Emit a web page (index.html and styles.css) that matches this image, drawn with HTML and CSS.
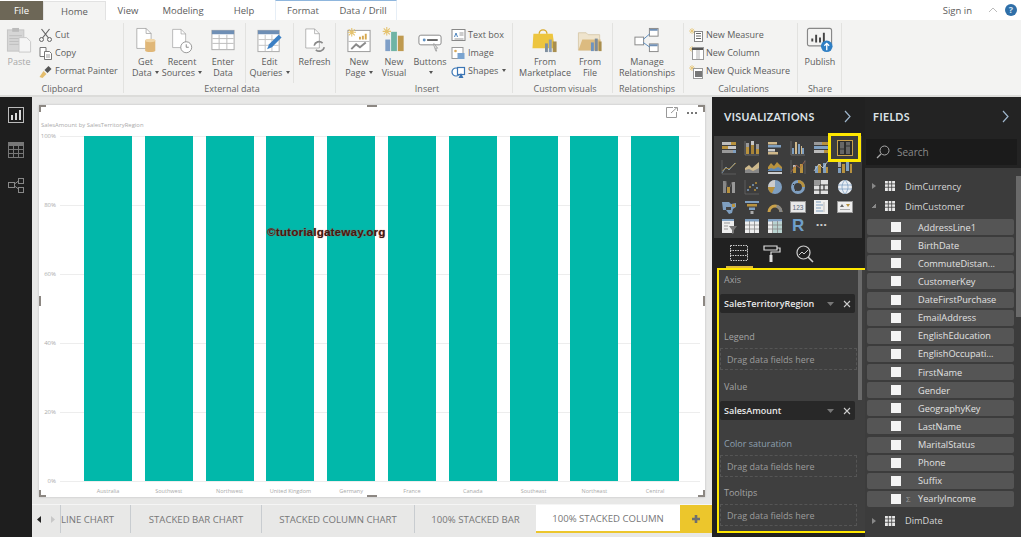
FILE: index.html
```html
<!DOCTYPE html>
<html lang="en">
<head>
<meta charset="utf-8">
<title>Power BI Desktop</title>
<link rel="stylesheet" href="styles.css">
</head>
<body>
<svg class="defs" width="0" height="0" aria-hidden="true">
  <symbol id="tbl" viewBox="0 0 12 12"><rect width="12" height="12" fill="#e8e8e8"/><path d="M4 0v12M8 0v12M0 3.500h12M0 7.500h12" stroke="#444" stroke-width="1"/></symbol>
  <symbol id="doc" viewBox="0 0 26 32"><path d="M2.500 1.500h13l7 7v21h-20z" fill="#fff" stroke="#9a9a9a"/><path d="M15.500 1.500v7h7" fill="none" stroke="#9a9a9a"/></symbol>
  <symbol id="spark" viewBox="0 0 8 8"><path d="M4 0v8M0 4h8M1.200 1.200l5.600 5.600M6.800 1.200l-5.600 5.600" stroke="#e5c36f" stroke-width="1"/></symbol>
</svg>
<div class="app">
  <header class="tabbar">
    <div class="tab-file">File</div>
    <div class="tab tab-home">Home</div>
    <div class="tab tab-view">View</div>
    <div class="tab tab-model">Modeling</div>
    <div class="tab tab-help">Help</div>
    <div class="tab-context">
      <div class="tab tab-format">Format</div>
      <div class="tab tab-drill">Data / Drill</div>
    </div>
    <div class="signin">Sign in</div>
    <svg class="caret-up" width="10" height="6" viewBox="0 0 10 6"><path d="M1 5l4-4 4 4" fill="none" stroke="#bbb"/></svg>
    <div class="help">?</div>
  </header>

  <section class="ribbon">
    <div class="group g-clip">
      <div class="group-body">
        <div class="big big-paste disabled">
          <svg class="bigicon" width="26" height="28" viewBox="0 0 26 28"><rect x="1" y="3" width="17" height="22" fill="#d6d6d6" stroke="#c4c4c4"/><rect x="6" y="1" width="7" height="4" fill="#bbb"/><path d="M3 9h13M3 12h13M3 15h13M3 18h13" stroke="#bdbdbd"/><path d="M13 11h8l4 4v11H13z" fill="#f5f5f5" stroke="#c8c8c8"/></svg>
          <span>Paste</span>
        </div>
        <div class="stack">
          <div class="small"><svg width="14" height="14" viewBox="0 0 14 14"><path d="M3 1l7 9M11 1L4 10" stroke="#666" stroke-width="1.200"/><circle cx="3" cy="11.500" r="2" fill="none" stroke="#666"/><circle cx="11" cy="11.500" r="2" fill="none" stroke="#666"/></svg><span>Cut</span></div>
          <div class="small"><svg width="14" height="14" viewBox="0 0 14 14"><path d="M1.500 1.500h6v9h-6z" fill="#fff" stroke="#777"/><path d="M6 5.500h5l2 2v6H6z" fill="#fff" stroke="#777"/><path d="M7.500 9h4M7.500 11h4" stroke="#999"/></svg><span>Copy</span></div>
          <div class="small"><svg width="14" height="14" viewBox="0 0 14 14"><path d="M1 12l4-6 3 3-4 4z" fill="#e4bd6d"/><path d="M6 5l4-4 3 3-4 4z" fill="#555"/></svg><span>Format Painter</span></div>
        </div>
      </div>
      <div class="group-label">Clipboard</div>
    </div>

    <div class="group g-ext">
      <div class="group-body">
        <div class="big w35">
          <svg class="bigicon" width="26" height="28" viewBox="0 0 26 32"><use href="#doc" width="22" height="28"/><path d="M12 16c0-2 12-2 12 0v12c0 2-12 2-12 0z" fill="#e0b778"/><ellipse cx="18" cy="16" rx="6" ry="2" fill="#f0d6a8"/></svg>
          <span>Get</span><span>Data <i class="arrow"></i></span>
        </div>
        <div class="big w38">
          <svg class="bigicon" width="26" height="28" viewBox="0 0 26 32"><use href="#doc" width="20" height="28"/><circle cx="18" cy="24" r="6.500" fill="#fff" stroke="#888"/><path d="M18 20.500V24h3" fill="none" stroke="#777"/></svg>
          <span>Recent</span><span>Sources <i class="arrow"></i></span>
        </div>
        <div class="big w44">
          <svg class="bigicon" width="24" height="28" viewBox="0 0 24 28"><rect x="0.500" y="3.500" width="23" height="20" fill="#fff" stroke="#aaa"/><rect x="0.500" y="3.500" width="23" height="4" fill="#6f8fb5"/><path d="M8 8v15M16 8v15M1 12h22M1 17h22" stroke="#bbb"/></svg>
          <span>Enter</span><span>Data</span>
        </div>
        <div class="big w48 sep-left">
          <svg class="bigicon" width="26" height="28" viewBox="0 0 26 28"><rect x="0.500" y="3.500" width="22" height="22" fill="#fff" stroke="#aaa"/><rect x="0.500" y="3.500" width="22" height="4" fill="#6f8fb5"/><path d="M8 8v17M15 8v17M1 13h21M1 19h21" stroke="#c5c5c5"/><path d="M10 23l2-5 10-10 3 3-10 10z" fill="#3c80c4"/></svg>
          <span>Edit</span><span>Queries <i class="arrow"></i></span>
        </div>
        <div class="big w42 sep-left">
          <svg class="bigicon" width="26" height="28" viewBox="0 0 26 32"><use href="#doc" width="21" height="28"/><path d="M12 22a6 6 0 0 1 10-3M24 24a6 6 0 0 1-10 3" fill="none" stroke="#888" stroke-width="2"/></svg>
          <span>Refresh</span>
        </div>
      </div>
      <div class="group-label">External data</div>
    </div>

    <div class="group g-ins">
      <div class="group-body">
        <div class="big w36">
          <svg class="bigicon" width="26" height="28" viewBox="0 0 26 28"><rect x="1.500" y="3.500" width="23" height="22" fill="#fff" stroke="#999"/><use href="#spark" x="1" y="1" width="9" height="9"/><path d="M14 13v-3M17 13V9M20 13V7" stroke="#d6a84f" stroke-width="2"/><path d="M2 15h22" stroke="#bbb"/><path d="M5 23l5-5 4 3 6-5" fill="none" stroke="#8a8a8a" stroke-width="2"/></svg>
          <span>New</span><span>Page <i class="arrow"></i></span>
        </div>
        <div class="big w34">
          <svg class="bigicon" width="24" height="28" viewBox="0 0 24 28"><use href="#spark" x="0" y="0" width="9" height="9"/><rect x="3" y="13" width="5" height="12" fill="#7f9fc7"/><rect x="9" y="5" width="6" height="20" fill="#6fb4a5"/><rect x="16" y="9" width="6" height="16" fill="#bf9a50"/></svg>
          <span>New</span><span>Visual</span>
        </div>
        <div class="big w38">
          <svg class="bigicon" width="24" height="28" viewBox="0 0 24 28"><rect x="0.500" y="8.500" width="23" height="10" rx="2" fill="#fff" stroke="#888"/><circle cx="6" cy="13.500" r="1.500" fill="#5e8fc0"/><path d="M9 13.500h11" stroke="#666" stroke-width="2"/><path d="M16 17l4 5-2 0 1 3-1 0-2-6z" fill="#ddd" stroke="#888" stroke-width=".6"/></svg>
          <span>Buttons</span><span><i class="arrow"></i></span>
        </div>
        <div class="stack stack-ins">
          <div class="small"><svg width="14" height="14" viewBox="0 0 14 14"><rect x="0.500" y="1.500" width="13" height="11" fill="#fff" stroke="#888"/><path d="M3 9l1.500-4L6 9" fill="none" stroke="#4d84bd"/><path d="M8 5h4M8 7h4M3 11h9" stroke="#999"/></svg><span>Text box</span></div>
          <div class="small"><svg width="14" height="14" viewBox="0 0 14 14"><rect x="0.500" y="1.500" width="11" height="11" fill="#fff" stroke="#999"/><circle cx="4" cy="5" r="1.300" fill="#d9a95a"/><rect x="6" y="7" width="7" height="6" fill="#7ba4d0"/></svg><span>Image</span></div>
          <div class="small"><svg width="14" height="14" viewBox="0 0 14 14"><circle cx="4.500" cy="7" r="4" fill="#fff" stroke="#3c76b4" stroke-width="1.200"/><rect x="6" y="2.500" width="7" height="7" fill="#fff" stroke="#3c76b4" stroke-width="1.200"/><path d="M7 13l2.500-5 2.500 5z" fill="#3c76b4"/></svg><span>Shapes <i class="arrow"></i></span></div>
        </div>
      </div>
      <div class="group-label">Insert</div>
    </div>

    <div class="group g-cust">
      <div class="group-body">
        <div class="big w56">
          <svg class="bigicon" width="26" height="28" viewBox="0 0 26 28"><path d="M7 7a4 4 0 0 1 8 0" fill="none" stroke="#d7a92c" stroke-width="1.500"/><path d="M1 7h20l2 15H0z" fill="#edc53f"/><rect x="13" y="17" width="3" height="9" fill="#7f8f9f"/><rect x="17" y="13" width="3" height="13" fill="#8d9fb5"/><rect x="21" y="15" width="4" height="11" fill="#a98e4e"/></svg>
          <span>From</span><span>Marketplace</span>
        </div>
        <div class="big w34">
          <svg class="bigicon" width="26" height="28" viewBox="0 0 26 28"><path d="M1 6h8l2 2h12v16H1z" fill="#efe4cd" stroke="#d9cbae"/><path d="M1 24l4-11h19l-1 11z" fill="#dcbb80"/><rect x="14" y="16" width="3" height="9" fill="#6e93bf"/><rect x="18" y="12" width="3" height="13" fill="#7d8c9b"/><rect x="22" y="15" width="3" height="10" fill="#a98e4e"/></svg>
          <span>From</span><span>File</span>
        </div>
      </div>
      <div class="group-label">Custom visuals</div>
    </div>

    <div class="group g-rel">
      <div class="group-body">
        <div class="big w66">
          <svg class="bigicon" width="26" height="28" viewBox="0 0 26 28"><rect x="0.500" y="10.500" width="9" height="8" fill="#fff" stroke="#888"/><rect x="15.500" y="1.500" width="9" height="8" fill="#fff" stroke="#888"/><rect x="15.500" y="17.500" width="9" height="8" fill="#fff" stroke="#888"/><path d="M16 2h8v2h-8zM16 18h8v2h-8z" fill="#6f8fb5"/><path d="M9 13l7-6M9 16l7 5" stroke="#5c8cbd"/></svg>
          <span>Manage</span><span>Relationships</span>
        </div>
      </div>
      <div class="group-label">Relationships</div>
    </div>

    <div class="group g-calc">
      <div class="group-body">
        <div class="stack">
          <div class="small"><svg width="15" height="14" viewBox="0 0 15 14"><use href="#spark" width="6" height="6"/><rect x="5.500" y="3.500" width="8" height="10" fill="#fff" stroke="#888"/><path d="M7 5.500h5M7 8h5M7 10.500h5" stroke="#666"/></svg><span>New Measure</span></div>
          <div class="small"><svg width="15" height="14" viewBox="0 0 15 14"><use href="#spark" width="6" height="6"/><rect x="3.500" y="1.500" width="11" height="12" fill="#fff" stroke="#999"/><rect x="7" y="2" width="4" height="11" fill="#d9d9d9"/><path d="M3 2h11v2H3z" fill="#555"/></svg><span>New Column</span></div>
          <div class="small"><svg width="15" height="14" viewBox="0 0 15 14"><use href="#spark" width="6" height="6"/><rect x="4.500" y="3.500" width="9" height="10" fill="#fff" stroke="#999"/><rect x="6" y="6" width="7" height="6" fill="#777"/></svg><span>New Quick Measure</span></div>
        </div>
      </div>
      <div class="group-label">Calculations</div>
    </div>

    <div class="group g-share">
      <div class="group-body">
        <div class="big w44 big-publish">
          <svg class="bigicon" width="28" height="28" viewBox="0 0 28 28"><rect x="1" y="1.500" width="25" height="18" rx="2" fill="none" stroke="#888" stroke-width="1.200"/><path d="M6 15v-3M10 16V8M14 16v-5M18 16V6" stroke="#444" stroke-width="2"/><circle cx="21" cy="20" r="6" fill="#2f7fc4"/><path d="M21 24v-7M18.500 19.500L21 17l2.500 2.500" fill="none" stroke="#fff" stroke-width="1.400"/></svg>
          <span>Publish</span>
        </div>
      </div>
      <div class="group-label">Share</div>
    </div>
    <div class="ribbon-rest"></div>
  </section>

  <main class="main">
    <nav class="leftnav">
      <svg width="16" height="16" viewBox="0 0 16 16"><rect x="0.500" y="0.500" width="15" height="15" fill="none" stroke="#bbb"/><path d="M4 13V8M8 13V6M12 13V3" stroke="#ddd" stroke-width="2"/></svg>
      <svg width="16" height="16" viewBox="0 0 16 16"><rect x="0.500" y="0.500" width="15" height="15" fill="none" stroke="#777"/><rect y="0" width="16" height="4" fill="#777"/><path d="M5.500 4v12M10.500 4v12M0 7.500h16M0 11.500h16" stroke="#777"/></svg>
      <svg width="16" height="16" viewBox="0 0 16 16"><rect x="0.500" y="5.500" width="6" height="5" fill="none" stroke="#888"/><rect x="10.500" y="1.500" width="5" height="5" fill="none" stroke="#888"/><rect x="10.500" y="10.500" width="5" height="5" fill="none" stroke="#888"/><path d="M6.500 7l4-3M6.500 9l4 3" stroke="#888"/></svg>
    </nav>

    <div class="canvas">
      <div class="page-wrap">
        <div class="page">
          <i class="handle h-tl"></i><i class="handle h-tr"></i><i class="handle h-bl"></i><i class="handle h-br"></i>
          <i class="grip grip-top"></i><i class="grip grip-bottom"></i><i class="grip-side grip-left"></i><i class="grip-side grip-right"></i>
          <div class="focus">
            <svg width="12" height="11" viewBox="0 0 12 11"><path d="M7 .500H.500v10h10V5M5 6L11 .500M8 .500h3.500V4" fill="none" stroke="#999"/></svg>
            <span class="dots"><i></i><i></i><i></i></span>
          </div>
          <div class="chart-title">SalesAmount by SalesTerritoryRegion</div>
          <div class="chart">
            <div class="yaxis"><span>100%</span><span>80%</span><span>60%</span><span>40%</span><span>20%</span><span>0%</span></div>
            <div class="chart-main">
              <div class="plot">
                <div class="bar"></div><div class="bar"></div><div class="bar"></div><div class="bar"></div><div class="bar"></div>
                <div class="bar"></div><div class="bar"></div><div class="bar"></div><div class="bar"></div><div class="bar"></div>
              </div>
              <div class="xaxis">
                <span>Australia</span><span>Southwest</span><span>Northwest</span><span>United Kingdom</span><span>Germany</span>
                <span>France</span><span>Canada</span><span>Southeast</span><span>Northeast</span><span>Central</span>
              </div>
            </div>
          </div>
          <div class="watermark">©tutorialgateway.org</div>
        </div>
      </div>
      <div class="pagetabs">
        <div class="tab-arrows">
          <svg width="5" height="7" viewBox="0 0 5 7"><path d="M4 0v7L0 3.500z" fill="#222"/></svg>
          <svg width="5" height="7" viewBox="0 0 5 7"><path d="M1 0v7l4-3.500z" fill="#c8c8c8"/></svg>
        </div>
        <div class="ptab pt-line">LINE CHART</div>
        <div class="ptab pt-bar">STACKED BAR CHART</div>
        <div class="ptab pt-col">STACKED COLUMN CHART</div>
        <div class="ptab pt-100bar">100% STACKED BAR</div>
        <div class="ptab pt-active">100% STACKED COLUMN</div>
        <div class="pt-add"><svg width="10" height="10" viewBox="0 0 10 10"><path d="M5 1v8M1 5h8" stroke="#6f6f6f" stroke-width="2.600"/></svg></div>
      </div>
    </div>

    <aside class="viz">
      <div class="panel-head head-viz"><span>VISUALIZATIONS</span><svg width="7" height="13" viewBox="0 0 7 13"><path d="M1 1l5 5.500L1 12" fill="none" stroke="#9fb6cc" stroke-width="1.200"/></svg></div>
      <div class="gallery">
        <svg viewBox="0 0 16 16"><path d="M1 2h9v3H1z" fill="#bdbdbd"/><path d="M10 2h5v3h-5z" fill="#b8923e"/><path d="M1 6h6v3H1z" fill="#b8923e"/><path d="M7 6h8v3H7z" fill="#c8c8c8"/><path d="M1 10h11v3H1z" fill="#999"/><path d="M12 10h3v3h-3z" fill="#7f9fc0"/></svg>
        <svg viewBox="0 0 16 16"><path d="M2 7h3v7H2z" fill="#b8923e"/><path d="M2 3h3v4H2z" fill="#999"/><path d="M7 5h3v9H7z" fill="#a88437"/><path d="M7 1h3v4H7z" fill="#c8c8c8"/><path d="M12 9h3v5h-3z" fill="#b8923e"/><path d="M12 4h3v5h-3z" fill="#999"/><path d="M1 1v14h14" fill="none" stroke="#777" stroke-width=".8"/></svg>
        <svg viewBox="0 0 16 16"><path d="M1 2h9v2.500H1z" fill="#d0b88a"/><path d="M1 5h13v2.500H1z" fill="#7f9fc0"/><path d="M1 9h7v2.500H1z" fill="#ccc"/><path d="M1 12h10v2.500H1z" fill="#d0b88a"/></svg>
        <svg viewBox="0 0 16 16"><path d="M2 8h2v6H2zM8 4h2v10H8zM12 8h2v6h-2z" fill="#7f9fc0"/><path d="M5 2h2v12H5zM11 6h1v8h-1z" fill="#d0b88a"/><path d="M1 1v14h14" fill="none" stroke="#777" stroke-width=".8"/></svg>
        <svg viewBox="0 0 16 16"><path d="M1 2h15v3H1z" fill="#999"/><path d="M1 6h15v3H1z" fill="#7f9fc0"/><path d="M1 10h15v3H1z" fill="#bbb"/><path d="M9 2h7v3H9zM11 10h5v3h-5z" fill="#b8923e"/></svg>
        <svg viewBox="0 0 16 16"><rect x="0.500" y="0.500" width="15" height="15" fill="#2c2c2c" stroke="#c9a14a"/><rect x="3" y="2" width="4" height="12" fill="#666"/><rect x="9" y="2" width="4" height="12" fill="#666"/><path d="M3 9h4M9 6h4" stroke="#333"/></svg>

        <svg viewBox="0 0 16 16"><path d="M1 14L5 8l3 3 6-7" fill="none" stroke="#7f9fc0"/><path d="M1 12l4-3 3 1 7-6" fill="none" stroke="#b8923e" stroke-width=".8"/><path d="M1 1v14h14" fill="none" stroke="#666" stroke-width=".8"/></svg>
        <svg viewBox="0 0 16 16"><path d="M1 14V9l4-3 3 3 7-6v11z" fill="#cdb88c"/><path d="M1 14v-3l4-1 4 2 6-3v5z" fill="#888"/></svg>
        <svg viewBox="0 0 16 16"><path d="M1 8l3-4 3 3 3-4 5 5v2H1z" fill="#b8923e"/><path d="M1 11l3-2 3 1 4-2 4 2v2H1z" fill="#5f88b5"/><path d="M1 13h14v2H1z" fill="#ccc"/></svg>
        <svg viewBox="0 0 16 16"><path d="M3 8h3v6H3zM10 5h3v9h-3z" fill="#b8923e"/><path d="M3 6h3v2H3z" fill="#bbb"/><path d="M1 13l5-7 4 3 5-7" fill="none" stroke="#b06a4a" stroke-width=".8"/><path d="M1 1v14M15 1v14" stroke="#777" stroke-width=".6"/></svg>
        <svg viewBox="0 0 16 16"><path d="M2 7h3v7H2zM10 4h3v10h-3z" fill="#7f9fc0"/><path d="M5 5h3v9H5zM13 8h2v6h-2z" fill="#b8923e"/><path d="M1 12l5-7 4 4 5-7" fill="none" stroke="#ccc" stroke-width=".8"/></svg>
        <svg viewBox="0 0 16 16"><path d="M1 3h3v5H1z" fill="#aaa"/><path d="M5 5h3v9H5z" fill="#b8923e"/><path d="M9 3h3v9H9z" fill="#7f9fc0"/><path d="M13 5h2v9h-2z" fill="#b8923e"/><path d="M1 9h3v5H1z" fill="#7f9fc0"/></svg>

        <svg viewBox="0 0 16 16"><path d="M2 2h3v12H2z" fill="#888"/><path d="M6 8h3v6H6z" fill="#b8923e"/><path d="M11 3h3v11h-3z" fill="#999"/><path d="M5 2l1 6M9 8l2-5" stroke="#666"/></svg>
        <svg viewBox="0 0 16 16"><path d="M1 1v14h14" fill="none" stroke="#666" stroke-width=".8"/><g fill="#7f9fc0"><circle cx="4" cy="11" r="1"/><circle cx="9" cy="6" r="1"/><circle cx="13" cy="9" r="1"/></g><g fill="#b8923e"><circle cx="6" cy="8" r="1"/><circle cx="11" cy="11" r="1"/><circle cx="12" cy="4" r="1"/></g></svg>
        <svg viewBox="0 0 16 16"><circle cx="8" cy="8" r="7" fill="#7f9fc0"/><path d="M8 8V1a7 7 0 0 0-7 7z" fill="#ccc"/><path d="M8 8H1a7 7 0 0 0 4 6.300z" fill="#b8923e"/></svg>
        <svg viewBox="0 0 16 16"><circle cx="8" cy="8" r="5.500" fill="none" stroke="#7f9fc0" stroke-width="3"/><path d="M8 2.500A5.500 5.500 0 0 1 13.500 8" fill="none" stroke="#b8923e" stroke-width="3"/><path d="M3 5l1 1M5 12l1-1" stroke="#333"/></svg>
        <svg viewBox="0 0 16 16"><rect x="1" y="1" width="14" height="14" fill="#e0e0e0"/><path d="M1 6h14M1 11h14M7 1v14M11 6v5" stroke="#333" stroke-width="1.200"/><rect x="1" y="1" width="6" height="5" fill="#999"/></svg>
        <svg viewBox="0 0 16 16"><circle cx="8" cy="8" r="7" fill="#e8edf3"/><path d="M1 6h14M1 10h14M8 1c-4 4-4 10 0 14M8 1c4 4 4 10 0 14" fill="none" stroke="#7f9fc0" stroke-width=".8"/></svg>

        <svg viewBox="0 0 16 16"><path d="M1 3h7l2 2 5-1v4l-3 2-1 4-3 1-3-4H2z" fill="#7f9fc0"/><path d="M5 8h5v3H5z" fill="#444"/><path d="M11 5h3v3h-3z" fill="#b8923e"/></svg>
        <svg viewBox="0 0 16 16"><path d="M1 2h14v2H1z" fill="#7f9fc0"/><path d="M3 5h10v2.500H3z" fill="#b8923e"/><path d="M5 8.500h6V11H5z" fill="#7f9fc0"/><path d="M6.500 12h3v3h-3z" fill="#aaa"/></svg>
        <svg viewBox="0 0 16 16"><path d="M2 13a6 6 0 0 1 12 0" fill="none" stroke="#c9a14a" stroke-width="3"/><path d="M9.500 7.300A6 6 0 0 1 14 13" fill="none" stroke="#888" stroke-width="3"/></svg>
        <svg viewBox="0 0 16 16"><rect x="0.500" y="2.500" width="15" height="11" fill="#e8e8e8" stroke="#999"/><text x="8" y="10.500" font-size="6.500" text-anchor="middle" fill="#567" font-family="Liberation Sans">123</text></svg>
        <svg viewBox="0 0 16 16"><rect x="1" y="1" width="14" height="14" fill="#eee"/><path d="M3 3h5M3 6h7M3 9h5M3 12h7" stroke="#7f9fc0"/><path d="M11 3v10" stroke="#bbb"/></svg>
        <svg viewBox="0 0 16 16"><rect x="0.500" y="2.500" width="15" height="11" fill="#eee" stroke="#999"/><path d="M3 8l2-3 2 3z" fill="#666"/><path d="M9 5h4l-2 3z" fill="#b8923e"/><path d="M3 10.500h10" stroke="#aaa"/></svg>

        <svg viewBox="0 0 16 16"><rect x="1" y="1" width="12" height="14" fill="#eee"/><rect x="1" y="1" width="12" height="2" fill="#7f9fc0"/><path d="M3 5h6M3 8h4M3 11h4" stroke="#999"/><path d="M8 8h8l-3 4v3l-2 1v-4z" fill="#777"/></svg>
        <svg viewBox="0 0 16 16"><rect x="1" y="1" width="14" height="14" fill="#eee"/><rect x="1" y="1" width="14" height="2.500" fill="#7f9fc0"/><path d="M5.500 3v12M10.500 3v12M1 7h14M1 11h14" stroke="#888" stroke-width=".8"/></svg>
        <svg viewBox="0 0 16 16"><rect x="1" y="1" width="14" height="14" fill="#eee"/><rect x="1" y="1" width="14" height="2.500" fill="#7f9fc0"/><rect x="6" y="4" width="9" height="11" fill="#b9d3d0"/><path d="M5.500 3v12M10.500 3v12M1 7h14M1 11h14" stroke="#888" stroke-width=".8"/></svg>
        <span class="gal-r">R</span>
        <span class="gal-more">···</span>
      </div>
      <div class="viz-tabs">
        <div class="viz-tab active"><svg width="18" height="16" viewBox="0 0 18 16"><path d="M.500.500h17v15H.500z" fill="none" stroke="#ccc" stroke-dasharray="1.500 1"/><path d="M0 5.500h18M0 10.500h18" stroke="#ccc" stroke-dasharray="1.500 1"/></svg></div>
        <div class="viz-tab"><svg width="18" height="18" viewBox="0 0 18 18"><path d="M1 1h13v4H1z" fill="none" stroke="#ddd" stroke-width="1.200"/><path d="M14 3h3v4H8v3" fill="none" stroke="#ddd" stroke-width="1.200"/><rect x="6.500" y="10" width="3" height="7" fill="#ddd"/></svg></div>
        <div class="viz-tab"><svg width="18" height="18" viewBox="0 0 18 18"><circle cx="7.500" cy="7.500" r="6.500" fill="none" stroke="#ccc" stroke-width="1.200"/><path d="M3 10l3-3 2 2 4-4" fill="none" stroke="#ccc"/><path d="M12 12l5 5" stroke="#ccc" stroke-width="1.600"/></svg></div>
      </div>
      <div class="wells">
        <div class="wells-scroll"></div>
        <div class="well-label w-axis">Axis</div>
        <div class="chip">
          <span>SalesTerritoryRegion</span>
          <svg class="chip-arrow" width="7" height="4" viewBox="0 0 7 4"><path d="M0 0h7L3.500 4z" fill="#777"/></svg>
          <svg class="chip-x" width="8" height="8" viewBox="0 0 8 8"><path d="M1 1l6 6M7 1L1 7" stroke="#ccc" stroke-width="1.100"/></svg>
        </div>
        <div class="well-label w-legend">Legend</div>
        <div class="drop">Drag data fields here</div>
        <div class="well-label w-value">Value</div>
        <div class="chip">
          <span>SalesAmount</span>
          <svg class="chip-arrow" width="7" height="4" viewBox="0 0 7 4"><path d="M0 0h7L3.500 4z" fill="#777"/></svg>
          <svg class="chip-x" width="8" height="8" viewBox="0 0 8 8"><path d="M1 1l6 6M7 1L1 7" stroke="#ccc" stroke-width="1.100"/></svg>
        </div>
        <div class="well-label w-color">Color saturation</div>
        <div class="drop">Drag data fields here</div>
        <div class="well-label w-tips">Tooltips</div>
        <div class="drop">Drag data fields here</div>
      </div>
      <div class="viz-highlight"></div>
    </aside>

    <aside class="fields">
      <div class="panel-head head-fields"><span>FIELDS</span><svg width="7" height="13" viewBox="0 0 7 13"><path d="M1 1l5 5.500L1 12" fill="none" stroke="#9fb6cc" stroke-width="1.200"/></svg></div>
      <div class="search">
        <svg width="14" height="14" viewBox="0 0 14 14"><circle cx="8.500" cy="5.500" r="4.500" fill="none" stroke="#aaa"/><path d="M5 9l-4 4" stroke="#aaa" stroke-width="1.200"/></svg>
        <span>Search</span>
      </div>
      <div class="field-body">
        <div class="f-scroll"></div>
        <div class="tbl-row"><i class="tri"></i><svg width="10" height="10"><use href="#tbl"/></svg><span>DimCurrency</span></div>
        <div class="tbl-row tbl-open"><i class="tri-open"></i><svg width="10" height="10"><use href="#tbl"/></svg><span>DimCustomer</span></div>
        <ul class="field-list">
          <li><i class="cb"></i><span>AddressLine1</span></li>
          <li><i class="cb"></i><span>BirthDate</span></li>
          <li><i class="cb"></i><span>CommuteDistan...</span></li>
          <li><i class="cb"></i><span>CustomerKey</span></li>
          <li><i class="cb"></i><span>DateFirstPurchase</span></li>
          <li><i class="cb"></i><span>EmailAddress</span></li>
          <li><i class="cb"></i><span>EnglishEducation</span></li>
          <li><i class="cb"></i><span>EnglishOccupati...</span></li>
          <li><i class="cb"></i><span>FirstName</span></li>
          <li><i class="cb"></i><span>Gender</span></li>
          <li><i class="cb"></i><span>GeographyKey</span></li>
          <li><i class="cb"></i><span>LastName</span></li>
          <li><i class="cb"></i><span>MaritalStatus</span></li>
          <li><i class="cb"></i><span>Phone</span></li>
          <li><i class="cb"></i><span>Suffix</span></li>
          <li><i class="cb"></i><b class="sigma">Σ</b><span class="after-sigma">YearlyIncome</span></li>
        </ul>
        <div class="tbl-row tbl-date"><i class="tri"></i><svg width="10" height="10"><use href="#tbl"/></svg><span>DimDate</span></div>
      </div>
    </aside>
  </main>
</div>
</body>
</html>
```
FILE: styles.css
```css
* { box-sizing: border-box; }
html, body { margin: 0; padding: 0; height: 100%; overflow: hidden; background: #2b2b2b; }
body { font-family: "Open Sans", "Noto Sans", sans-serif; color: #5c5c5c; }
.defs { position: absolute; }
i { font-style: normal; display: block; }
.app { width: 1021px; height: 537px; display: flex; flex-direction: column; }

/* tab bar */
.tabbar { height: 20px; flex: none; display: flex; align-items: stretch; background: #fff; font-size: 9.500px; position: relative; }
.tab-file { width: 43px; margin-top: 1px; background: #6d6757; color: #fff; display: flex; align-items: center; justify-content: center; }
.tab { display: flex; align-items: center; justify-content: center; color: #5c5c5c; }
.tab-home { width: 63px; background: #f4f4f3; border: 1px solid #e2e2e2; border-bottom: 0; margin-top: 1px; }
.tab-view { width: 34px; margin-left: 5px; }
.tab-model { width: 76px; }
.tab-help { width: 44px; margin-left: 1px; }
.tab-context { display: flex; width: 122px; margin-left: 9px; border-top: 1px solid #8fb6dd; border-left: 1px solid #e6eef6; border-right: 1px solid #e6eef6; }
.tab-format { width: 54px; }
.tab-drill { width: 66px; }
.signin { margin-left: auto; align-self: center; margin-right: 16px; }
.caret-up { align-self: center; margin-right: 7px; }
.help { width: 12px; height: 12px; margin: 4px 4px 0 0; border-radius: 50%; background: #2f6fa8; color: #cfe2f2; font-size: 9px; font-weight: 700; line-height: 12px; text-align: center; }

/* ribbon */
.ribbon { height: 77px; flex: none; display: flex; background: #f3f3f2; border-bottom: 2px solid #dcdcda; font-size: 9px; line-height: 10.500px; }
.group { display: flex; flex-direction: column; flex: none; position: relative; padding-top: 3px; }
.group::after { content: ""; position: absolute; right: 0; top: 3px; bottom: 2px; width: 1px; background: #e2e2e0; }
.group-body { flex: 1; display: flex; min-height: 0; }
.group-label { height: 12px; flex: none; text-align: center; line-height: 12px; color: #666; }
.g-clip { width: 124px; }
.g-ext { width: 212px; padding-left: 4px; }
.g-ins { width: 177px; padding-left: 5px; }
.g-cust { width: 100px; padding-left: 4px; }
.g-rel { width: 71px; padding-left: 1px; padding-right: 4px; }
.g-calc { width: 114px; padding-left: 5px; }
.g-share { width: 44px; }
.ribbon-rest { flex: 1; }
.big { display: flex; flex-direction: column; align-items: center; flex: none; white-space: nowrap; position: relative; }
.big .bigicon { height: 27px; margin: 4px 0 3px; flex: none; }
.big-paste { width: 38px; }
.disabled { color: #a8a8a8; }
.w34 { width: 34px; } .w35 { width: 35px; } .w36 { width: 36px; } .w38 { width: 38px; }
.w42 { width: 42px; } .w44 { width: 44px; } .w48 { width: 48px; } .w56 { width: 56px; } .w66 { width: 66px; }
.sep-left { border-left: 1px solid #e2e2e0; }
.arrow { display: inline-block; width: 0; height: 0; border: 2px solid transparent; border-top: 3px solid #555; border-bottom: 0; vertical-align: 2px; margin-left: 1px; }
.stack { display: flex; flex-direction: column; padding-top: 3px; white-space: nowrap; }
.stack-ins { margin-left: 2px; }
.small { height: 18.300px; display: flex; align-items: center; gap: 2px; }
.small svg { flex: none; width: 15px; }

/* main */
.main { flex: 1; min-height: 0; display: flex; }
.leftnav { width: 32px; flex: none; background: #1e1e1e; display: flex; flex-direction: column; align-items: center; gap: 19px; padding-top: 10px; }
.canvas { width: 680px; flex: none; background: #e8e8e7; display: flex; flex-direction: column; }
.page-wrap { flex: 1; min-height: 0; padding: 8px 7px 7px 7px; }
.page { height: 100%; background: #fff; position: relative; box-shadow: 0 0 2px #bbb; padding: 16px 0 0 2px; }
.handle { position: absolute; width: 7px; height: 7px; border: 2px solid #8c8782; }
.h-tl { left: 0; top: 0; border-right: 0; border-bottom: 0; }
.h-tr { right: 0; top: 0; border-left: 0; border-bottom: 0; }
.h-bl { left: 0; bottom: 0; border-right: 0; border-top: 0; }
.h-br { right: 0; bottom: 0; border-left: 0; border-top: 0; }
.grip { position: absolute; left: 50%; width: 10px; margin-left: -5px; height: 2px; background: #8c8782; }
.grip-top { top: 0; } .grip-bottom { bottom: 0; }
.grip-side { position: absolute; top: 50%; height: 10px; width: 2px; margin-top: -5px; background: #8c8782; }
.grip-left { left: 0; } .grip-right { right: 0; }
.focus { position: absolute; top: 2px; right: 8px; display: flex; align-items: center; gap: 9px; }
.dots { display: flex; gap: 2px; }
.dots i { width: 2px; height: 2px; background: #777; }
.chart-title { font-size: 5.900px; line-height: 9px; color: #aaa; white-space: nowrap; }
.chart { display: flex; margin-top: 6px; }
.yaxis { width: 15px; flex: none; height: 355px; margin-top: -5px; display: flex; flex-direction: column; justify-content: space-between; align-items: flex-end; font-size: 6px; line-height: 10px; color: #aaa; }
.yaxis span { height: 10px; }
.chart-main { width: 640px; margin-left: 4px; }
.plot { height: 345px; display: grid; grid-template-columns: repeat(10, 48px); column-gap: 12.800px; padding-left: 24px; background-image: repeating-linear-gradient(to bottom, #ededed 0, #ededed 1px, transparent 1px, transparent 69px); border-bottom: 1px solid #ededed; box-sizing: content-box; }
.bar { background: #01b8aa; }
.xaxis { display: grid; grid-template-columns: repeat(10, 60.800px); padding-left: 17.600px; margin-top: 5px; font-size: 5.500px; line-height: 9px; color: #aaa; text-align: center; white-space: nowrap; }
.watermark { position: absolute; left: 228px; top: 120px; font-size: 11.600px; line-height: 14px; font-weight: 700; color: #3a1c14; letter-spacing: .2px; text-shadow: 0 0 1px #d44; white-space: nowrap; font-family: "Liberation Sans", sans-serif; }

/* page tabs */
.pagetabs { height: 29px; flex: none; margin-bottom: 4px; display: flex; align-items: stretch; background: #e8e8e7; font-size: 9.600px; color: #777; border-top: 1px solid #f5f5f5; }
.tab-arrows { width: 28px; display: flex; align-items: center; gap: 8px; padding-left: 5px; }
.ptab { display: flex; align-items: center; justify-content: center; white-space: nowrap; border-left: 1px solid #c8ccd0; }
.pt-line { width: 70px; justify-content: flex-start; }
.pt-bar { width: 131px; }
.pt-col { width: 153px; }
.pt-100bar { width: 122px; }
.pt-active { width: 144px; background: #fff; border: 0; border-bottom: 2px solid #ecc62c; }
.pt-add { width: 32px; background: #ecc62c; display: flex; align-items: center; justify-content: center; }

/* visualizations */
.viz { width: 153px; flex: none; background: #212121; position: relative; display: flex; flex-direction: column; color: #ccc; padding-left: 2px; }
.panel-head { height: 39px; flex: none; display: flex; align-items: center; justify-content: space-between; font-family: "Lato", sans-serif; font-weight: 700; font-size: 10.600px; letter-spacing: .4px; color: #dde3e8; }
.head-viz { padding: 0 14px 0 10px; }
.gallery { height: 102px; flex: none; width: 148px; background: #3d3d3d; display: grid; grid-template-columns: repeat(6, 23.200px); grid-auto-rows: 19.600px; padding: 2px 0 0 3px; justify-items: center; align-items: center; }
.gallery svg { width: 16px; height: 16px; }
.gal-r { font-family: "Liberation Sans", sans-serif; font-weight: 700; font-size: 17px; line-height: 18px; color: #6f9fc9; }
.gal-more { font-size: 13px; line-height: 14px; color: #cfcfcf; font-weight: 700; margin-top: -4px; }
.viz-tabs { height: 30px; flex: none; display: flex; padding-left: 14px; gap: 11px; align-items: flex-start; padding-top: 5px; }
.viz-tab { width: 22px; height: 25px; display: flex; justify-content: center; padding-top: 2px; position: relative; }
.viz-tab.active::after { content: ""; position: absolute; left: -2px; right: -3px; bottom: 0; height: 2px; background: #e0ba3a; }
.wells { flex: 1; min-height: 0; margin: 0 -2px 4px 3px; background: #3f3f3f; border: 2px solid #ffe800; display: flex; flex-direction: column; padding: 4px 10px 0 1px; position: relative; font-size: 9px; color: #a3a3a3; }
.wells-scroll { position: absolute; top: 0; right: 3px; width: 4px; height: 130px; background: #6a6a6a; }
.well-label { height: 12px; line-height: 12px; padding-left: 4px; flex: none; }
.w-axis { margin-top: 0; }
.w-legend { margin-top: 18px; }
.w-value { margin-top: 11px; }
.w-color { margin-top: 18px; color: #8ea0b0; }
.w-tips { margin-top: 10px; }
.chip { height: 19px; flex: none; margin-top: 8px; border-radius: 2px; background: #282828; color: #e8e8e8; display: flex; align-items: center; padding: 0 4px; font-size: 9px; font-weight: 600; }
.chip span { flex: 1; }
.chip-arrow { margin-right: 9px; }
.chip-x { flex: none; }
.drop { height: 22px; flex: none; margin: 5px -2px 0 0; border: 1px dashed #555; color: #9c9c9c; display: flex; align-items: center; padding-left: 6px; }
.viz-highlight { position: absolute; left: 116px; top: 36px; width: 33px; height: 29px; border: 3px solid #ffe800; pointer-events: none; }

/* fields */
.fields { width: 156px; flex: none; background: #232323; display: flex; flex-direction: column; color: #ddd; }
.head-fields { padding: 0 12px 0 8px; }
.search { height: 26px; margin: 3px 4px 3px 1px; flex: none; background: #1b1b1b; display: flex; align-items: center; gap: 7px; padding-left: 10px; font-size: 10px; color: #8a8a8a; }
.field-body { flex: 1; min-height: 0; background: #3c3c3c; position: relative; padding: 8px 0 0 2px; font-size: 9.200px; }
.f-scroll { position: absolute; right: 0; top: 8px; width: 5px; height: 141px; background: #6a6a6a; }
.tbl-row { height: 20px; display: flex; align-items: center; color: #d6d6d6; padding-left: 5px; }
.tbl-row svg { margin-left: 9px; flex: none; }
.tbl-row span { margin-left: 10px; }
.tri { width: 0; height: 0; border: 3px solid transparent; border-left: 4px solid #888; border-right: 0; }
.tri-open { width: 4px; height: 4px; background: linear-gradient(135deg, transparent 50%, #888 50%); }
.field-list { list-style: none; margin: 3px 0 0; padding: 0; width: 147px; display: flex; flex-direction: column; gap: 2.130px; }
.field-list li { height: 16px; background: #555; border-radius: 2px; display: flex; align-items: center; padding-left: 24px; color: #e2e2e2; white-space: nowrap; }
.cb { width: 10px; height: 10px; background: #f4f4f4; flex: none; margin-right: 17px; }
.sigma { font-weight: 400; color: #999; font-size: 8px; margin-left: -12px; width: 12px; }
.after-sigma { margin-left: 0; }
.tbl-date { margin-top: 4px; }
```
